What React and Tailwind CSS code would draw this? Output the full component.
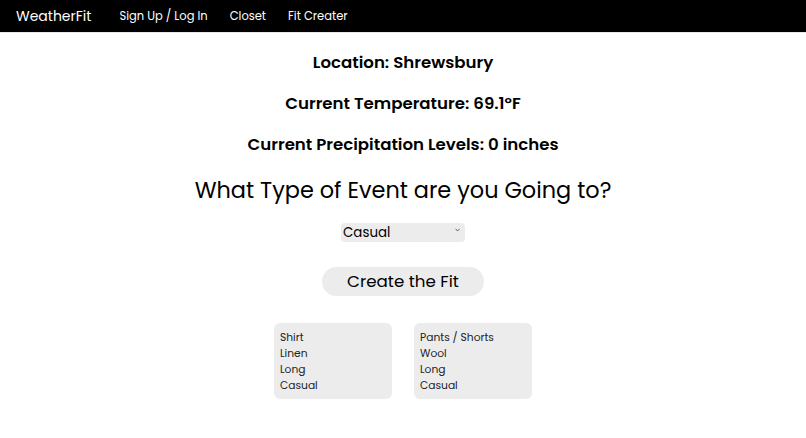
import React, { useState } from 'react';

const font = "font-['Poppins','Open_Sans',sans-serif]";

function ItemCard({ lines }) {
  return (
    <div className="w-[118px] h-[76px] rounded-md bg-[#ececec] px-[6px] pt-[7px] text-[10.7px] leading-[16px] text-[#222]">
      {lines.map((l) => (
        <div key={l}>{l}</div>
      ))}
    </div>
  );
}

export default function App() {
  const [event, setEvent] = useState('Casual');

  return (
    <div className={`min-h-[438px] bg-white text-black ${font}`}>
      {/* Nav */}
      <nav className="h-[33px] bg-black border-b border-[#e8e8e8] flex items-center pl-4 pt-[1px] text-white">
        <span className="text-[14px] mr-[28px]">WeatherFit</span>
        <div className="flex items-center gap-[22px] text-[11.5px]">
          <a>Sign Up / Log In</a>
          <a>Closet</a>
          <a>Fit Creater</a>
        </div>
      </nav>

      <main className="flex flex-col items-center pt-[10px]">
        <p className="h-[41px] flex items-center text-[16.6px] font-semibold">Location: Shrewsbury</p>
        <p className="h-[41px] flex items-center text-[16.6px] font-semibold">Current Temperature: 69.1°F</p>
        <p className="h-[41px] flex items-center text-[16.6px] font-semibold">Current Precipitation Levels: 0 inches</p>
        <h2 className="h-[49px] flex items-center text-[22.4px]">What Type of Event are you Going to?</h2>

        <div className="relative mt-[5px] w-[124px] h-[19px]">
          <select
            value={event}
            onChange={(e) => setEvent(e.target.value)}
            className="appearance-none w-full h-full bg-[#ececec] rounded-[4px] pl-[2px] text-[13.4px] leading-[19px] outline-none"
          >
            <option>Casual</option>
            <option>Formal</option>
            <option>Sports</option>
          </select>
          <svg className="absolute right-[5px] top-[8px] pointer-events-none" width="5" height="4" viewBox="0 0 5 4">
            <path d="M0.5 0.8 L2.5 3 L4.5 0.8" fill="none" stroke="#555" strokeWidth="0.9" />
          </svg>
        </div>

        <button className="mt-[28px] w-[162px] h-[29px] rounded-full bg-[#ececec] text-[16.7px]">
          Create the Fit
        </button>

        <div className="mt-[27px] flex gap-[22px]">
          <ItemCard lines={['Shirt', 'Linen', 'Long', 'Casual']} />
          <ItemCard lines={['Pants / Shorts', 'Wool', 'Long', 'Casual']} />
        </div>
      </main>
    </div>
  );
}
